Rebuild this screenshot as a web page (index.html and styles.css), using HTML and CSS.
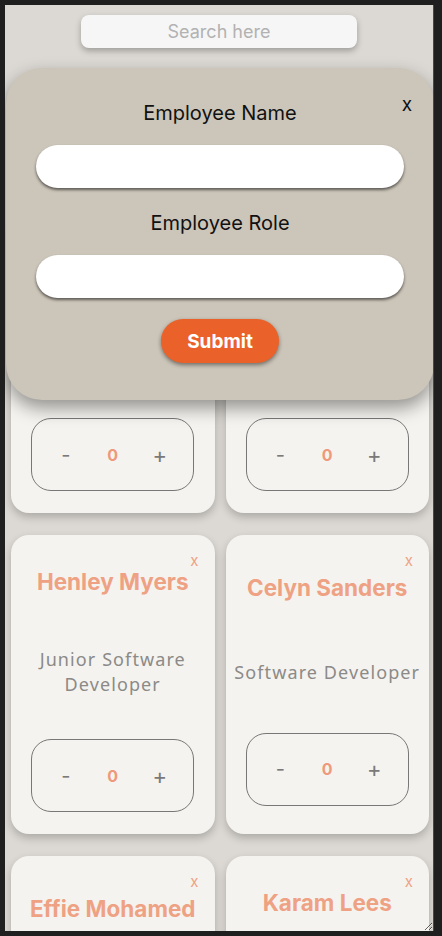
FILE: index.html
```html
<!DOCTYPE html>
<html lang="en">
<head>
<meta charset="utf-8">
<title>Employees</title>
<link rel="stylesheet" href="styles.css">
</head>
<body>
<div class="app">
  <div class="search-wrap">
    <input class="search" type="text" placeholder="Search here">
  </div>

  <div class="grid">
    <div class="card">
      <span class="card-close">x</span>
      <h2 class="name">Amara Jones</h2>
      <p class="role">Senior Product Designer</p>
      <div class="counter"><span class="minus">-</span><span class="count">0</span><span class="plus">+</span></div>
    </div>
    <div class="card">
      <span class="card-close">x</span>
      <h2 class="name">Rory Bishop</h2>
      <p class="role">Quality Assurance Tester</p>
      <div class="counter"><span class="minus">-</span><span class="count">0</span><span class="plus">+</span></div>
    </div>

    <div class="card">
      <span class="card-close">x</span>
      <h2 class="name">Henley Myers</h2>
      <p class="role">Junior Software Developer</p>
      <div class="counter"><span class="minus">-</span><span class="count">0</span><span class="plus">+</span></div>
    </div>
    <div class="card">
      <span class="card-close">x</span>
      <h2 class="name">Celyn Sanders</h2>
      <p class="role">Software Developer</p>
      <div class="counter"><span class="minus">-</span><span class="count">0</span><span class="plus">+</span></div>
    </div>

    <div class="card">
      <span class="card-close">x</span>
      <h2 class="name">Effie Mohamed</h2>
      <p class="role">Software Developer</p>
      <div class="counter"><span class="minus">-</span><span class="count">0</span><span class="plus">+</span></div>
    </div>
    <div class="card">
      <span class="card-close">x</span>
      <h2 class="name">Karam Lees</h2>
      <p class="role">Senior Software Developer</p>
      <div class="counter"><span class="minus">-</span><span class="count">0</span><span class="plus">+</span></div>
    </div>
  </div>

  <div class="modal">
    <span class="modal-close">x</span>
    <label class="label">Employee Name</label>
    <input class="field" type="text">
    <label class="label">Employee Role</label>
    <input class="field" type="text">
    <button class="submit">Submit</button>
  </div>
</div>
</body>
</html>
```

FILE: styles.css
```css
* { box-sizing: border-box; }

html, body {
  margin: 0;
  height: 100%;
}

body {
  background: #1f1f1f;
  padding: 5px 8px 5px 5px;
  font-family: "Inter", "Liberation Sans", sans-serif;
}

.app {
  position: relative;
  width: 429px;
  height: 926px;
  overflow: hidden;
  resize: both;
  background: #dcd9d4;
  border-right: 1px solid #4a4a48;
}

.search-wrap {
  display: flex;
  justify-content: center;
  padding-top: 10px;
}

.search {
  width: 276px;
  height: 33px;
  border: none;
  border-radius: 8px;
  background: #f6f6f6;
  box-shadow: 0 3px 6px rgba(0, 0, 0, 0.28);
  font-family: "Inter", "Liberation Sans", sans-serif;
  font-size: 18px;
  text-align: center;
  color: #333;
  outline: none;
}

.search::placeholder { color: #b2b2b2; }

.grid {
  display: grid;
  grid-template-columns: 1fr 1fr;
  column-gap: 11px;
  row-gap: 22px;
  padding: 0 4px 0 6px;
  margin-top: 166px;
}

.card {
  position: relative;
  display: flex;
  flex-direction: column;
  justify-content: space-evenly;
  align-items: center;
  background: #f5f3ef;
  border-radius: 18px;
  padding: 32px 6px 22px;
  box-shadow: 0 4px 8px rgba(0, 0, 0, 0.22);
}

.card-close {
  position: absolute;
  top: 17px;
  right: 16px;
  font-size: 15px;
  color: #eea283;
  line-height: 18px;
}

.name {
  margin: 0;
  font-size: 22.5px;
  font-weight: 700;
  line-height: 30px;
  color: #eea283;
  text-align: center;
  white-space: nowrap;
}

.role {
  margin: 50px 0 0;
  font-family: "Noto Sans", "Open Sans", sans-serif;
  font-size: 18px;
  letter-spacing: 1.1px;
  line-height: 25px;
  color: #8b8a88;
  text-align: center;
}

.counter {
  margin-top: 42px;
  width: 163px;
  height: 73px;
  border: 1px solid #777;
  border-radius: 20px;
  display: grid;
  grid-template-columns: repeat(3, 47px);
  justify-content: center;
  align-items: center;
  justify-items: center;
  color: #7a7a7a;
  flex-shrink: 0;
}

.minus { font-size: 20px; }
.plus { font-size: 22px; }
.count { font-size: 16px; font-weight: 700; color: #ee9a7a; }

.modal {
  position: absolute;
  top: 63px;
  left: 1px;
  width: 428px;
  height: 332px;
  background: #ccc5b9;
  border-radius: 36px;
  box-shadow: 0 8px 18px rgba(0, 0, 0, 0.4);
  display: flex;
  flex-direction: column;
  align-items: center;
  padding-top: 33px;
}

.modal-close {
  position: absolute;
  top: 25px;
  right: 22px;
  font-size: 19px;
  color: #111;
}

.label {
  font-size: 20px;
  line-height: 24px;
  color: #111;
}

.field {
  width: 368px;
  height: 43px;
  margin: 20px 0 23px;
  border: none;
  border-radius: 22px;
  background: #fff;
  box-shadow: 0 2px 3px rgba(0, 0, 0, 0.55);
  outline: none;
}

.field:last-of-type { margin-bottom: 21px; }

.submit {
  width: 118px;
  height: 44px;
  border: none;
  border-radius: 22px;
  background: #ea612a;
  color: #fff;
  font-family: "Inter", "Liberation Sans", sans-serif;
  font-size: 19px;
  font-weight: 700;
  box-shadow: 0 2px 4px rgba(0, 0, 0, 0.45);
}
```
